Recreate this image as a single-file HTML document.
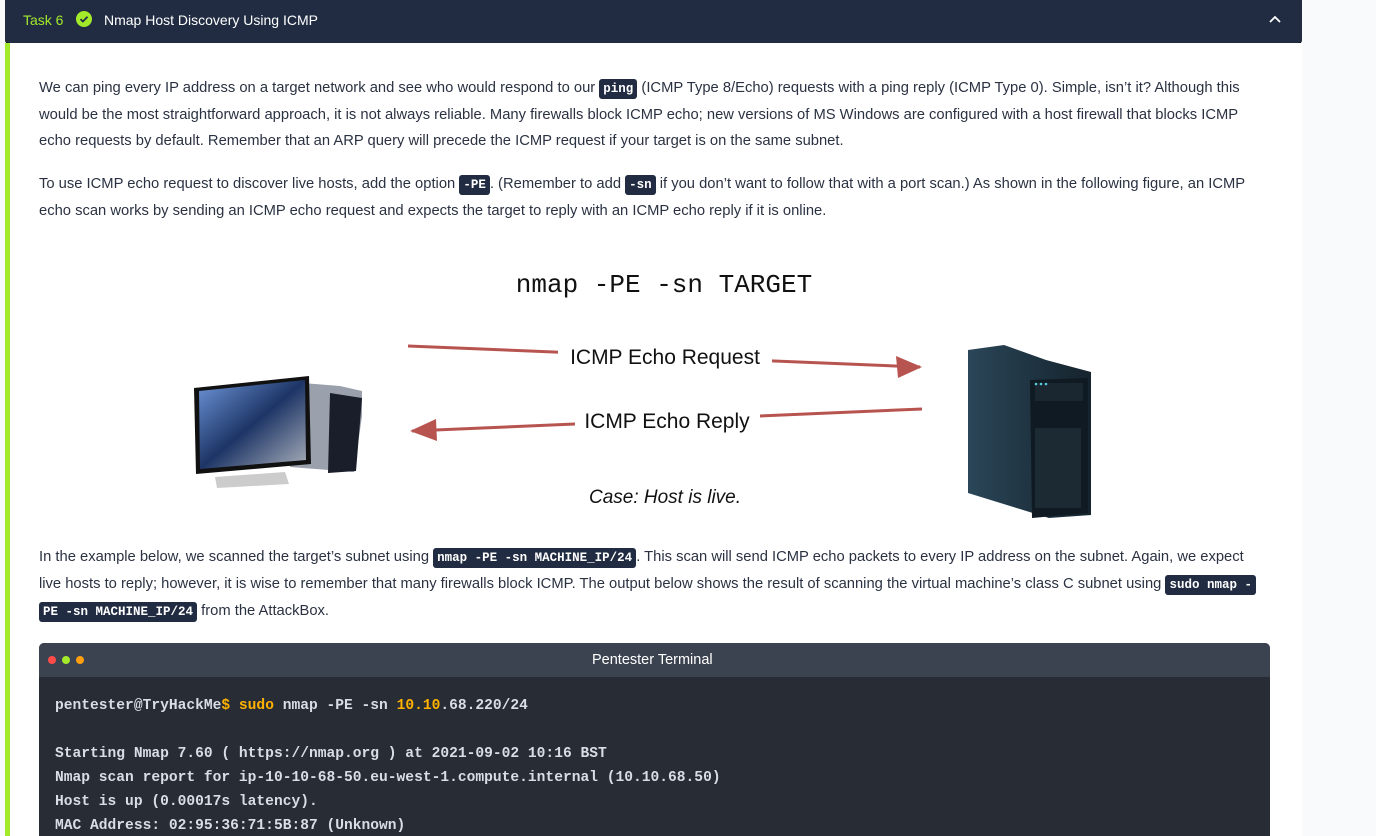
<!DOCTYPE html>
<html><head><meta charset="utf-8"><style>
body{margin:0;width:1376px;height:836px;overflow:hidden;background:#f9fafb;font-family:"Liberation Sans",sans-serif;}
.hdr{position:absolute;left:5px;top:0;width:1297px;height:43px;background:#212c42;border-radius:0 0 4px 4px;box-shadow:0 1px 0 #000;}
.task{position:absolute;left:18px;top:12px;color:#a3ea2a;font-size:14px;}
.chk{position:absolute;left:71px;top:11px;width:16px;height:16px;border-radius:50%;background:#a3ea2a;}
.title{position:absolute;left:99px;top:12px;color:#fff;font-size:14px;}
.main{position:absolute;left:5px;top:43px;width:1297px;height:793px;background:#fff;border-left:5px solid #a3ea2a;box-sizing:border-box;}
.l{position:absolute;left:39px;font-size:14.75px;color:#2a3242;white-space:nowrap;}
code{font-family:"Liberation Mono",monospace;font-weight:bold;background:#212c42;color:#fff;font-size:12.5px;padding:3px 4px;border-radius:3px;}
.term{position:absolute;left:39px;top:643px;width:1231px;height:193px;background:#272c35;border-radius:5px 5px 0 0;overflow:hidden;}
.th{height:34px;background:#3c4350;position:relative;}
.tl{position:absolute;left:16px;font-family:"Liberation Mono",monospace;font-weight:bold;font-size:14.6px;color:#d8dde6;white-space:pre;}
.y{color:#ffb100}
</style></head><body>
<div class="hdr"><span class="task">Task 6</span><span class="chk"><svg width="16" height="16"><path d="M4.5 8.2l2.4 2.3 4.6-4.8" stroke="#212c42" stroke-width="1.8" fill="none"/></svg></span><span class="title">Nmap Host Discovery Using ICMP</span>
<svg style="position:absolute;left:1263px;top:13px" width="14" height="12"><path d="M2 9l5-5 5 5" stroke="#fff" stroke-width="1.8" fill="none"/></svg></div>
<div class="main"></div>
<div class="l" style="top:80px">We can ping every IP address on a target network and see who would respond to our <code>ping</code> (ICMP Type 8/Echo) requests with a ping reply (ICMP Type 0). Simple, isn’t it? Although this</div>
<div class="l" style="top:107px">would be the most straightforward approach, it is not always reliable. Many firewalls block ICMP echo; new versions of MS Windows are configured with a host firewall that blocks ICMP</div>
<div class="l" style="top:133px">echo requests by default. Remember that an ARP query will precede the ICMP request if your target is on the same subnet.</div>
<div class="l" style="top:176px">To use ICMP echo request to discover live hosts, add the option <code>-PE</code>. (Remember to add <code>-sn</code> if you don’t want to follow that with a port scan.) As shown in the following figure, an ICMP</div>
<div class="l" style="top:203px">echo scan works by sending an ICMP echo request and expects the target to reply with an ICMP echo reply if it is online.</div>
<svg style="position:absolute;left:0;top:0" width="1376" height="540">
<text x="664" y="292" text-anchor="middle" font-family="Liberation Mono" font-size="26" fill="#111">nmap -PE -sn TARGET</text>
<path d="M408 346L920 367" stroke="#b85450" stroke-width="3"/><path d="M922 367l-26-11 2 22z" fill="#b85450"/>
<path d="M922 409L412 431" stroke="#b85450" stroke-width="3"/><path d="M410 431l26-12 1 22z" fill="#b85450"/>
<rect x="558" y="344" width="214" height="24" fill="#fff"/><text x="665" y="364" text-anchor="middle" font-size="21" fill="#111">ICMP Echo Request</text>
<rect x="575" y="408" width="185" height="24" fill="#fff"/><text x="667" y="428" text-anchor="middle" font-size="21" fill="#111">ICMP Echo Reply</text>
<text x="665" y="503" text-anchor="middle" font-size="19" font-style="italic" fill="#111">Case: Host is live.</text>
<defs><linearGradient id="sc" x1="0" y1="0" x2="1" y2="1"><stop offset="0" stop-color="#6d95d8"/><stop offset=".5" stop-color="#1d3566"/><stop offset="1" stop-color="#aab0bb"/></linearGradient>
<linearGradient id="sv" x1="0" y1="0" x2="1" y2="0"><stop offset="0" stop-color="#2a4658"/><stop offset="1" stop-color="#15232d"/></linearGradient></defs>
<path d="M290 382l50 4 22 5v25l-8 56-64-5z" fill="#9aa1ad"/><path d="M330 393l32 5-6 73-28 2z" fill="#1a1e2a"/>
<path d="M194 388l115-12 2 88-115 10z" fill="#111"/><path d="M199 391l106-11 1 80-106 9z" fill="url(#sc)"/>
<path d="M215 477l70-5 4 12-72 4z" fill="#ccc"/>
<path d="M968 350l36-5 42 15 45 12v143l-42 3-81-25z" fill="url(#sv)"/><path d="M1030 380l58-2v135l-56 5z" fill="#0f1a22"/>
<rect x="1035" y="383" width="48" height="18" fill="#1a2630"/><circle cx="1036" cy="384" r="1.3" fill="#5cd"/><circle cx="1041" cy="384" r="1.3" fill="#5cd"/><circle cx="1046" cy="384" r="1.3" fill="#5cd"/>
<rect x="1035" y="428" width="46" height="80" fill="#1c2a33"/>
</svg>
<div class="l" style="top:549px">In the example below, we scanned the target’s subnet using <code>nmap -PE -sn MACHINE_IP/24</code>. This scan will send ICMP echo packets to every IP address on the subnet. Again, we expect</div>
<div class="l" style="top:576px">live hosts to reply; however, it is wise to remember that many firewalls block ICMP. The output below shows the result of scanning the virtual machine’s class C subnet using <code>sudo nmap -</code></div>
<div class="l" style="top:603px"><code>PE -sn MACHINE_IP/24</code> from the AttackBox.</div>
<div class="term"><div class="th">
<span style="position:absolute;left:9px;top:13px;width:8px;height:8px;border-radius:50%;background:#ff4a4a"></span>
<span style="position:absolute;left:23px;top:13px;width:8px;height:8px;border-radius:50%;background:#a3ea2a"></span>
<span style="position:absolute;left:37px;top:13px;width:8px;height:8px;border-radius:50%;background:#ff9f10"></span>
<span style="position:absolute;left:553px;top:9px;color:#fff;font-size:14.5px">Pentester Terminal</span></div>
<div class="tl" style="top:55px">pentester@TryHackMe<span class="y">$ sudo</span> nmap -PE -sn <span class="y">10.10</span>.68.220/24</div>
<div class="tl" style="top:103px">Starting Nmap 7.60 ( https://nmap.org ) at 2021-09-02 10:16 BST</div>
<div class="tl" style="top:127px">Nmap scan report for ip-10-10-68-50.eu-west-1.compute.internal (10.10.68.50)</div>
<div class="tl" style="top:151px">Host is up (0.00017s latency).</div>
<div class="tl" style="top:175px">MAC Address: 02:95:36:71:5B:87 (Unknown)</div>
</div>
</body></html>
